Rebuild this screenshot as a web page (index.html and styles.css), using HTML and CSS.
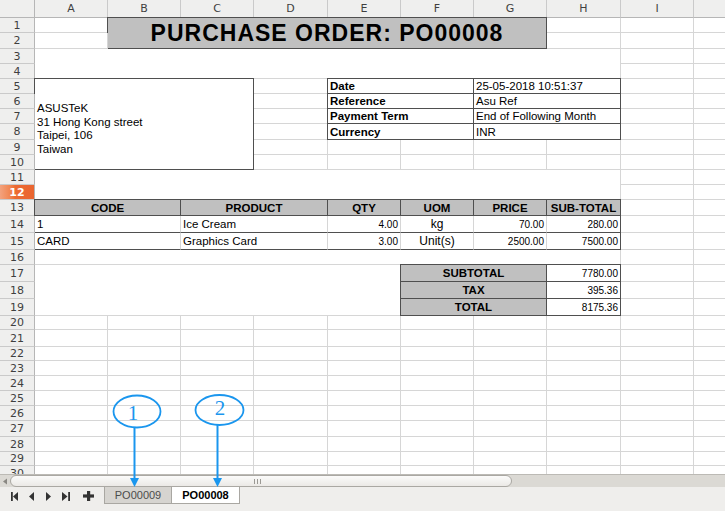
FILE: index.html
```html
<!DOCTYPE html>
<html>
<head>
<meta charset="utf-8">
<link rel="stylesheet" href="styles.css">
</head>
<body>
<div class="app">
  <div class="viewport">
    <div class="sheet">
      <div class="ch corner"></div><div class="ch">A</div><div class="ch">B</div><div class="ch">C</div><div class="ch">D</div><div class="ch">E</div><div class="ch">F</div><div class="ch">G</div><div class="ch">H</div><div class="ch">I</div><div class="ch"></div>

      <div class="rh">1</div><div></div><div class="title box">PURCHASE ORDER: PO00008</div><div></div><div></div><div></div>
      <div class="rh">2</div><div></div><div></div><div></div><div></div>
      <div class="rh">3</div><div class="gap8"></div><div></div><div></div>
      <div class="rh">4</div><div></div><div></div>
      <div class="rh">5</div>
      <div class="addr box"><span>ASUSTeK</span><span>31 Hong Kong street</span><span>Taipei, 106</span><span>Taiwan</span></div>
      <div></div><div class="lbl box">Date</div><div class="val box">25-05-2018 10:51:37</div><div></div><div></div>
      <div class="rh">6</div><div></div><div class="lbl box">Reference</div><div class="val box">Asu Ref</div><div></div><div></div>
      <div class="rh">7</div><div></div><div class="lbl box">Payment Term</div><div class="val box">End of Following Month</div><div></div><div></div>
      <div class="rh">8</div><div></div><div class="lbl box">Currency</div><div class="val box">INR</div><div></div><div></div>
      <div class="rh">9</div><div></div><div></div><div></div><div></div><div></div><div></div><div></div>
      <div class="rh">10</div><div></div><div></div><div></div><div></div><div></div><div></div><div></div>
      <div class="rh">11</div><div class="gap8"></div><div></div><div></div>
      <div class="rh active">12</div><div></div><div></div>
      <div class="rh">13</div><div class="th box span2">CODE</div><div class="th box span2">PRODUCT</div><div class="th box">QTY</div><div class="th box">UOM</div><div class="th box">PRICE</div><div class="th box">SUB-TOTAL</div><div></div><div></div>
      <div class="rh">14</div><div class="td span2">1</div><div class="td span2">Ice Cream</div><div class="td num">4.00</div><div class="td uom">kg</div><div class="td num">70.00</div><div class="td num last">280.00</div><div></div><div></div>
      <div class="rh">15</div><div class="td span2">CARD</div><div class="td span2">Graphics Card</div><div class="td num">3.00</div><div class="td uom">Unit(s)</div><div class="td num">2500.00</div><div class="td num last">7500.00</div><div></div><div></div>
      <div class="rh">16</div><div class="wide8"></div><div></div><div></div>
      <div class="rh">17</div><div class="blank5"></div><div class="tl box">SUBTOTAL</div><div class="tv box num">7780.00</div><div></div><div></div>
      <div class="rh">18</div><div class="tl box">TAX</div><div class="tv box num">395.36</div><div></div><div></div>
      <div class="rh">19</div><div class="tl box">TOTAL</div><div class="tv box num">8175.36</div><div></div><div></div>
      <div class="rh">20</div><div></div><div></div><div></div><div></div><div></div><div></div><div></div><div></div><div></div><div></div>
      <div class="rh">21</div><div></div><div></div><div></div><div></div><div></div><div></div><div></div><div></div><div></div><div></div>
      <div class="rh">22</div><div></div><div></div><div></div><div></div><div></div><div></div><div></div><div></div><div></div><div></div>
      <div class="rh">23</div><div></div><div></div><div></div><div></div><div></div><div></div><div></div><div></div><div></div><div></div>
      <div class="rh">24</div><div></div><div></div><div></div><div></div><div></div><div></div><div></div><div></div><div></div><div></div>
      <div class="rh">25</div><div></div><div></div><div></div><div></div><div></div><div></div><div></div><div></div><div></div><div></div>
      <div class="rh">26</div><div></div><div></div><div></div><div></div><div></div><div></div><div></div><div></div><div></div><div></div>
      <div class="rh">27</div><div></div><div></div><div></div><div></div><div></div><div></div><div></div><div></div><div></div><div></div>
      <div class="rh">28</div><div></div><div></div><div></div><div></div><div></div><div></div><div></div><div></div><div></div><div></div>
      <div class="rh">29</div><div></div><div></div><div></div><div></div><div></div><div></div><div></div><div></div><div></div><div></div>
      <div class="rh">30</div><div></div><div></div><div></div><div></div><div></div><div></div><div></div><div></div><div></div><div></div>
    </div>
  </div>

  <div class="hscroll">
    <div class="hs-btn"><svg width="6" height="7" viewBox="0 0 6 7"><polygon points="5,0.5 1,3.5 5,6.5" fill="#8a8883"/></svg></div>
    <div class="hs-thumb"><span class="grip"><i></i><i></i><i></i></span></div>
    <div class="hs-track"></div>
  </div>

  <div class="tabbar">
    <div class="nav">
      <span class="navbtn"><svg width="7" height="9" viewBox="0 0 7 9"><rect x="0" y="0" width="1.8" height="9" fill="#333"/><polygon points="7,0 2,4.5 7,9" fill="#333"/></svg></span>
      <span class="navbtn"><svg width="5" height="9" viewBox="0 0 5 9"><polygon points="5,0 0,4.5 5,9" fill="#333"/></svg></span>
      <span class="navbtn"><svg width="5" height="9" viewBox="0 0 5 9"><polygon points="0,0 5,4.5 0,9" fill="#333"/></svg></span>
      <span class="navbtn"><svg width="8" height="9" viewBox="0 0 8 9"><polygon points="0,0 5.5,4.5 0,9" fill="#333"/><rect x="6.2" y="0" width="1.8" height="9" fill="#333"/></svg></span>
      <span class="navbtn plus"><svg width="11" height="10" viewBox="0 0 11 10"><rect x="4" y="0" width="3.2" height="10" fill="#333"/><rect x="0" y="3.4" width="11" height="3.2" fill="#333"/></svg></span>
    </div>
    <div class="tabs">
      <div class="tab">PO00009</div>
      <div class="tab current">PO00008</div>
    </div>
  </div>
</div>

<svg class="annot" width="725" height="511" viewBox="0 0 725 511">
  <ellipse cx="137" cy="411.5" rx="23.5" ry="16" fill="none" stroke="#1a96ee" stroke-width="1.8"/>
  <text x="133" y="420" text-anchor="middle" class="annot-num">1</text>
  <line x1="134.5" y1="427.5" x2="134.5" y2="479" stroke="#1a96ee" stroke-width="2"/>
  <polygon points="130,478 139,478 134.5,487" fill="#1a96ee"/>
  <ellipse cx="219.5" cy="410" rx="24" ry="15" fill="none" stroke="#1a96ee" stroke-width="1.8"/>
  <text x="220" y="415" text-anchor="middle" class="annot-num">2</text>
  <line x1="217.5" y1="425" x2="217.5" y2="479" stroke="#1a96ee" stroke-width="2"/>
  <polygon points="213,478 222,478 217.5,487" fill="#1a96ee"/>
</svg>
</body>
</html>
```

FILE: styles.css
```css
* { box-sizing: border-box; }
html, body { margin: 0; padding: 0; }
body {
  width: 725px;
  height: 511px;
  overflow: hidden;
  position: relative;
  background: #efeeec;
  font-family: "Liberation Sans", Arial, sans-serif;
}
.app { display: flex; flex-direction: column; height: 511px; }

.viewport { height: 474px; overflow: hidden; background: #fff; flex: none; }

.sheet {
  display: grid;
  width: 767px;
  grid-template-columns: 35px 73px 73px 73px 74px 73px 73px 73px 74px 73px 73px;
  grid-template-rows: 18px 15px 16px 15px 15px 15px 15px 15px 16px 15px 15px 15px 15px 16px 17px 17px 15px 17px 17px 17px 14px 17px 14px 15px 15px 15px 15px 16px 15px 14px 15px;
}
.sheet > div {
  border-right: 1px solid #d6d6d6;
  border-bottom: 1px solid #d6d6d6;
  min-width: 0;
  overflow: hidden;
  white-space: nowrap;
  display: flex;
  align-items: center;
  padding: 0 2px;
  font-size: 11.5px;
  color: #000;
}

/* headers */
.sheet > .ch {
  background: #efefee;
  border-right-color: #cacaca;
  border-bottom-color: #b6b6b6;
  justify-content: center;
  font-family: "DejaVu Sans", sans-serif;
  font-size: 11px;
  color: #3f3f3f;
}
.sheet > .ch.corner { border-right-color: #b6b6b6; }
.sheet > .rh {
  background: #efefee;
  border-right-color: #b6b6b6;
  border-bottom-color: #cacaca;
  justify-content: center;
  font-family: "DejaVu Sans", sans-serif;
  font-size: 11px;
  color: #3f3f3f;
  padding: 0;
}
.sheet > .rh.active {
  background: linear-gradient(90deg, #f3a27d 0, #f08550 30%, #ec6a33 45%, #ea6530 100%);
  color: #fff;
  font-weight: bold;
}

/* dark framed cells */
.sheet > .box {
  border: 1px solid #4f4f4f;
  margin: -1px 0 0 -1px;
}

.sheet > .title {
  grid-column: span 6;
  grid-row: span 2;
  background: #c0c0c0;
  justify-content: center;
  font-weight: bold;
  font-size: 23px;
  letter-spacing: 1px;
  color: #000;
  padding: 0;
}

.sheet > .gap8 { grid-column: span 8; grid-row: span 2; }
.sheet > .wide8 { grid-column: span 8; }
.sheet > .blank5 { grid-column: span 5; grid-row: span 3; }
.sheet > .span2 { grid-column: span 2; }

.sheet > .addr {
  grid-column: span 3;
  grid-row: span 6;
  flex-direction: column;
  align-items: flex-start;
  justify-content: flex-start;
  padding: 23px 0 0 2px;
  line-height: 13.5px;
}

.sheet > .lbl { grid-column: span 2; font-weight: bold; }
.sheet > .val { grid-column: span 2; }

.sheet > .th {
  background: #c0c0c0;
  font-weight: bold;
  justify-content: center;
}
.sheet > .td { border-bottom-color: #4f4f4f; }
.sheet > .td.last { border-right-color: #4f4f4f; }
.sheet > .num { justify-content: flex-end; font-size: 10px; }
.sheet > .uom { justify-content: center; font-size: 12px; }

.sheet > .tl {
  grid-column: span 2;
  background: #c0c0c0;
  font-weight: bold;
  justify-content: center;
}

/* horizontal scrollbar */
.hscroll {
  height: 13px;
  flex: none;
  display: flex;
  background: #dbd9d4;
  border-top: 1px solid #bcbab5;
}
.hs-btn {
  width: 10px;
  display: flex;
  align-items: center;
  justify-content: center;
}
.hs-thumb {
  width: 502px;
  border: 1px solid #aaa8a3;
  border-radius: 6px;
  background: linear-gradient(#fbfbfa, #ebe9e6);
  display: flex;
  align-items: center;
  justify-content: center;
}
.grip { display: flex; gap: 2px; margin-left: -8px; }
.grip i { display: block; width: 1px; height: 5px; background: #9b9994; }
.hs-track { flex: 1; }

/* tab bar */
.tabbar {
  flex: 1;
  display: flex;
  align-items: flex-start;
  background: #efeeec;
}
.nav { display: flex; padding-left: 6px; padding-top: 4px; }
.navbtn {
  width: 17px;
  height: 10px;
  display: flex;
  align-items: center;
  justify-content: center;
}
.navbtn.plus { margin-left: 6px; }
.tabs { display: flex; margin-left: 7px; }
.tab {
  width: 68px;
  height: 17px;
  display: flex;
  align-items: center;
  justify-content: center;
  font-size: 11px;
  color: #4c4c4c;
  background: #d6d4d0;
  border: 1px solid #a9a7a2;
  border-top: none;
}
.tab.current {
  background: #fff;
  color: #000;
  font-weight: bold;
  border-left: none;
}

/* annotations overlay */
.annot {
  position: absolute;
  left: 0;
  top: 0;
  pointer-events: none;
}
.annot-num {
  font-family: "Liberation Serif", serif;
  font-size: 21px;
  fill: #1a96ee;
}
```
